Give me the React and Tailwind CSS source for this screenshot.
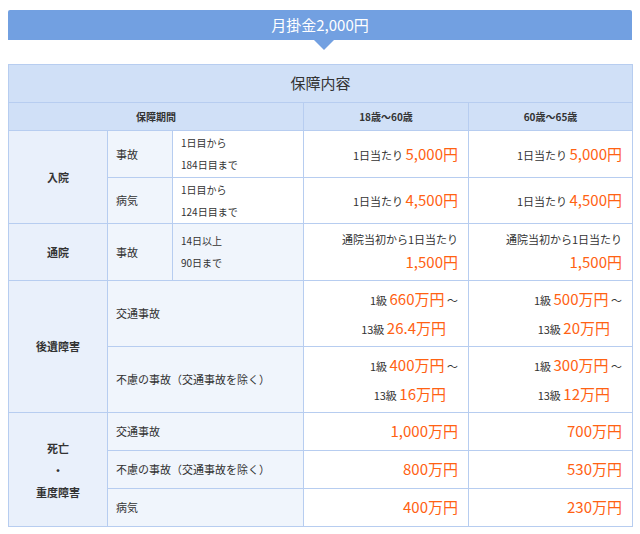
import React from 'react';

const b = 'border border-[#b7cdf0]';
const lab = `${b} bg-[#e9f0fb] text-center font-bold text-[11px] text-[#333]`;
const sub = `${b} bg-[#f0f5fc] text-left px-2 text-[11px] text-[#333]`;
const val = `${b} bg-white text-right pr-[10px] text-[11px] text-[#333]`;
const O = ({ children }) => <span className="text-[#ff6213] text-[15px]">{children}</span>;

const Grade = ({ a, c }) => (
  <div className="flex flex-col gap-[6px]">
    <div>1級 <O>{a}</O> ～</div>
    <div className="pr-[12px]">13級 <O>{c}</O></div>
  </div>
);

export default function App() {
  return (
    <div className="w-[640px] h-[534px] bg-white pt-[10px] px-[8px]" style={{ fontFamily: '"Noto Sans CJK JP", "Noto Sans", sans-serif' }}>
      <div className="relative h-[30px] bg-[#72a0e1] rounded-t-[2px] flex items-center justify-center text-white text-[15px]">
        月掛金2,000円
        <div className="absolute left-[306px] top-[30px] w-0 h-0 border-l-[10px] border-r-[10px] border-t-[10px] border-l-transparent border-r-transparent border-t-[#72a0e1]" />
      </div>
      <table className="mt-[24px] w-[624px] border-collapse table-fixed">
        <colgroup>
          <col className="w-[99px]" /><col className="w-[65px]" /><col className="w-[131px]" /><col className="w-[165px]" /><col className="w-[164px]" />
        </colgroup>
        <tbody>
          <tr className="h-[38px]"><td colSpan={5} className={`${b} bg-[#d0e0f7] text-center text-[15px] text-[#333]`}>保障内容</td></tr>
          <tr className="h-[28px] bg-[#d0e0f7] text-[10px] font-bold text-[#333] text-center">
            <td colSpan={3} className={b}>保障期間</td><td className={b}>18歳～60歳</td><td className={b}>60歳～65歳</td>
          </tr>
          <tr className="h-[47px]">
            <td rowSpan={2} className={lab}>入院</td>
            <td className={sub}>事故</td>
            <td className={`${b} px-2 text-[10px] leading-[22px] text-[#333]`}>1日目から<br />184日目まで</td>
            <td className={val}>1日当たり <O>5,000円</O></td>
            <td className={val}>1日当たり <O>5,000円</O></td>
          </tr>
          <tr className="h-[46px]">
            <td className={sub}>病気</td>
            <td className={`${b} px-2 text-[10px] leading-[22px] text-[#333]`}>1日目から<br />124日目まで</td>
            <td className={val}>1日当たり <O>4,500円</O></td>
            <td className={val}>1日当たり <O>4,500円</O></td>
          </tr>
          <tr className="h-[57px]">
            <td className={lab}>通院</td>
            <td className={sub}>事故</td>
            <td className={`${b} bg-[#f0f5fc] px-2 text-[10px] leading-[22px] text-[#333]`}>14日以上<br />90日まで</td>
            <td className={val}><div>通院当初から1日当たり</div><div className="mt-[4px]"><O>1,500円</O></div></td>
            <td className={val}><div>通院当初から1日当たり</div><div className="mt-[4px]"><O>1,500円</O></div></td>
          </tr>
          <tr className="h-[66px]">
            <td rowSpan={2} className={lab}>後遺障害</td>
            <td colSpan={2} className={sub}>交通事故</td>
            <td className={val}><Grade a="660万円" c="26.4万円" /></td>
            <td className={val}><Grade a="500万円" c="20万円" /></td>
          </tr>
          <tr className="h-[66px]">
            <td colSpan={2} className={sub}>不慮の事故（交通事故を除く）</td>
            <td className={val}><Grade a="400万円" c="16万円" /></td>
            <td className={val}><Grade a="300万円" c="12万円" /></td>
          </tr>
          <tr className="h-[38px]">
            <td rowSpan={3} className={`${lab} leading-[22px]`}>死亡<br />・<br />重度障害</td>
            <td colSpan={2} className={sub}>交通事故</td>
            <td className={val}><O>1,000万円</O></td>
            <td className={val}><O>700万円</O></td>
          </tr>
          <tr className="h-[38px]">
            <td colSpan={2} className={sub}>不慮の事故（交通事故を除く）</td>
            <td className={val}><O>800万円</O></td>
            <td className={val}><O>530万円</O></td>
          </tr>
          <tr className="h-[38px]">
            <td colSpan={2} className={sub}>病気</td>
            <td className={val}><O>400万円</O></td>
            <td className={val}><O>230万円</O></td>
          </tr>
        </tbody>
      </table>
    </div>
  );
}
